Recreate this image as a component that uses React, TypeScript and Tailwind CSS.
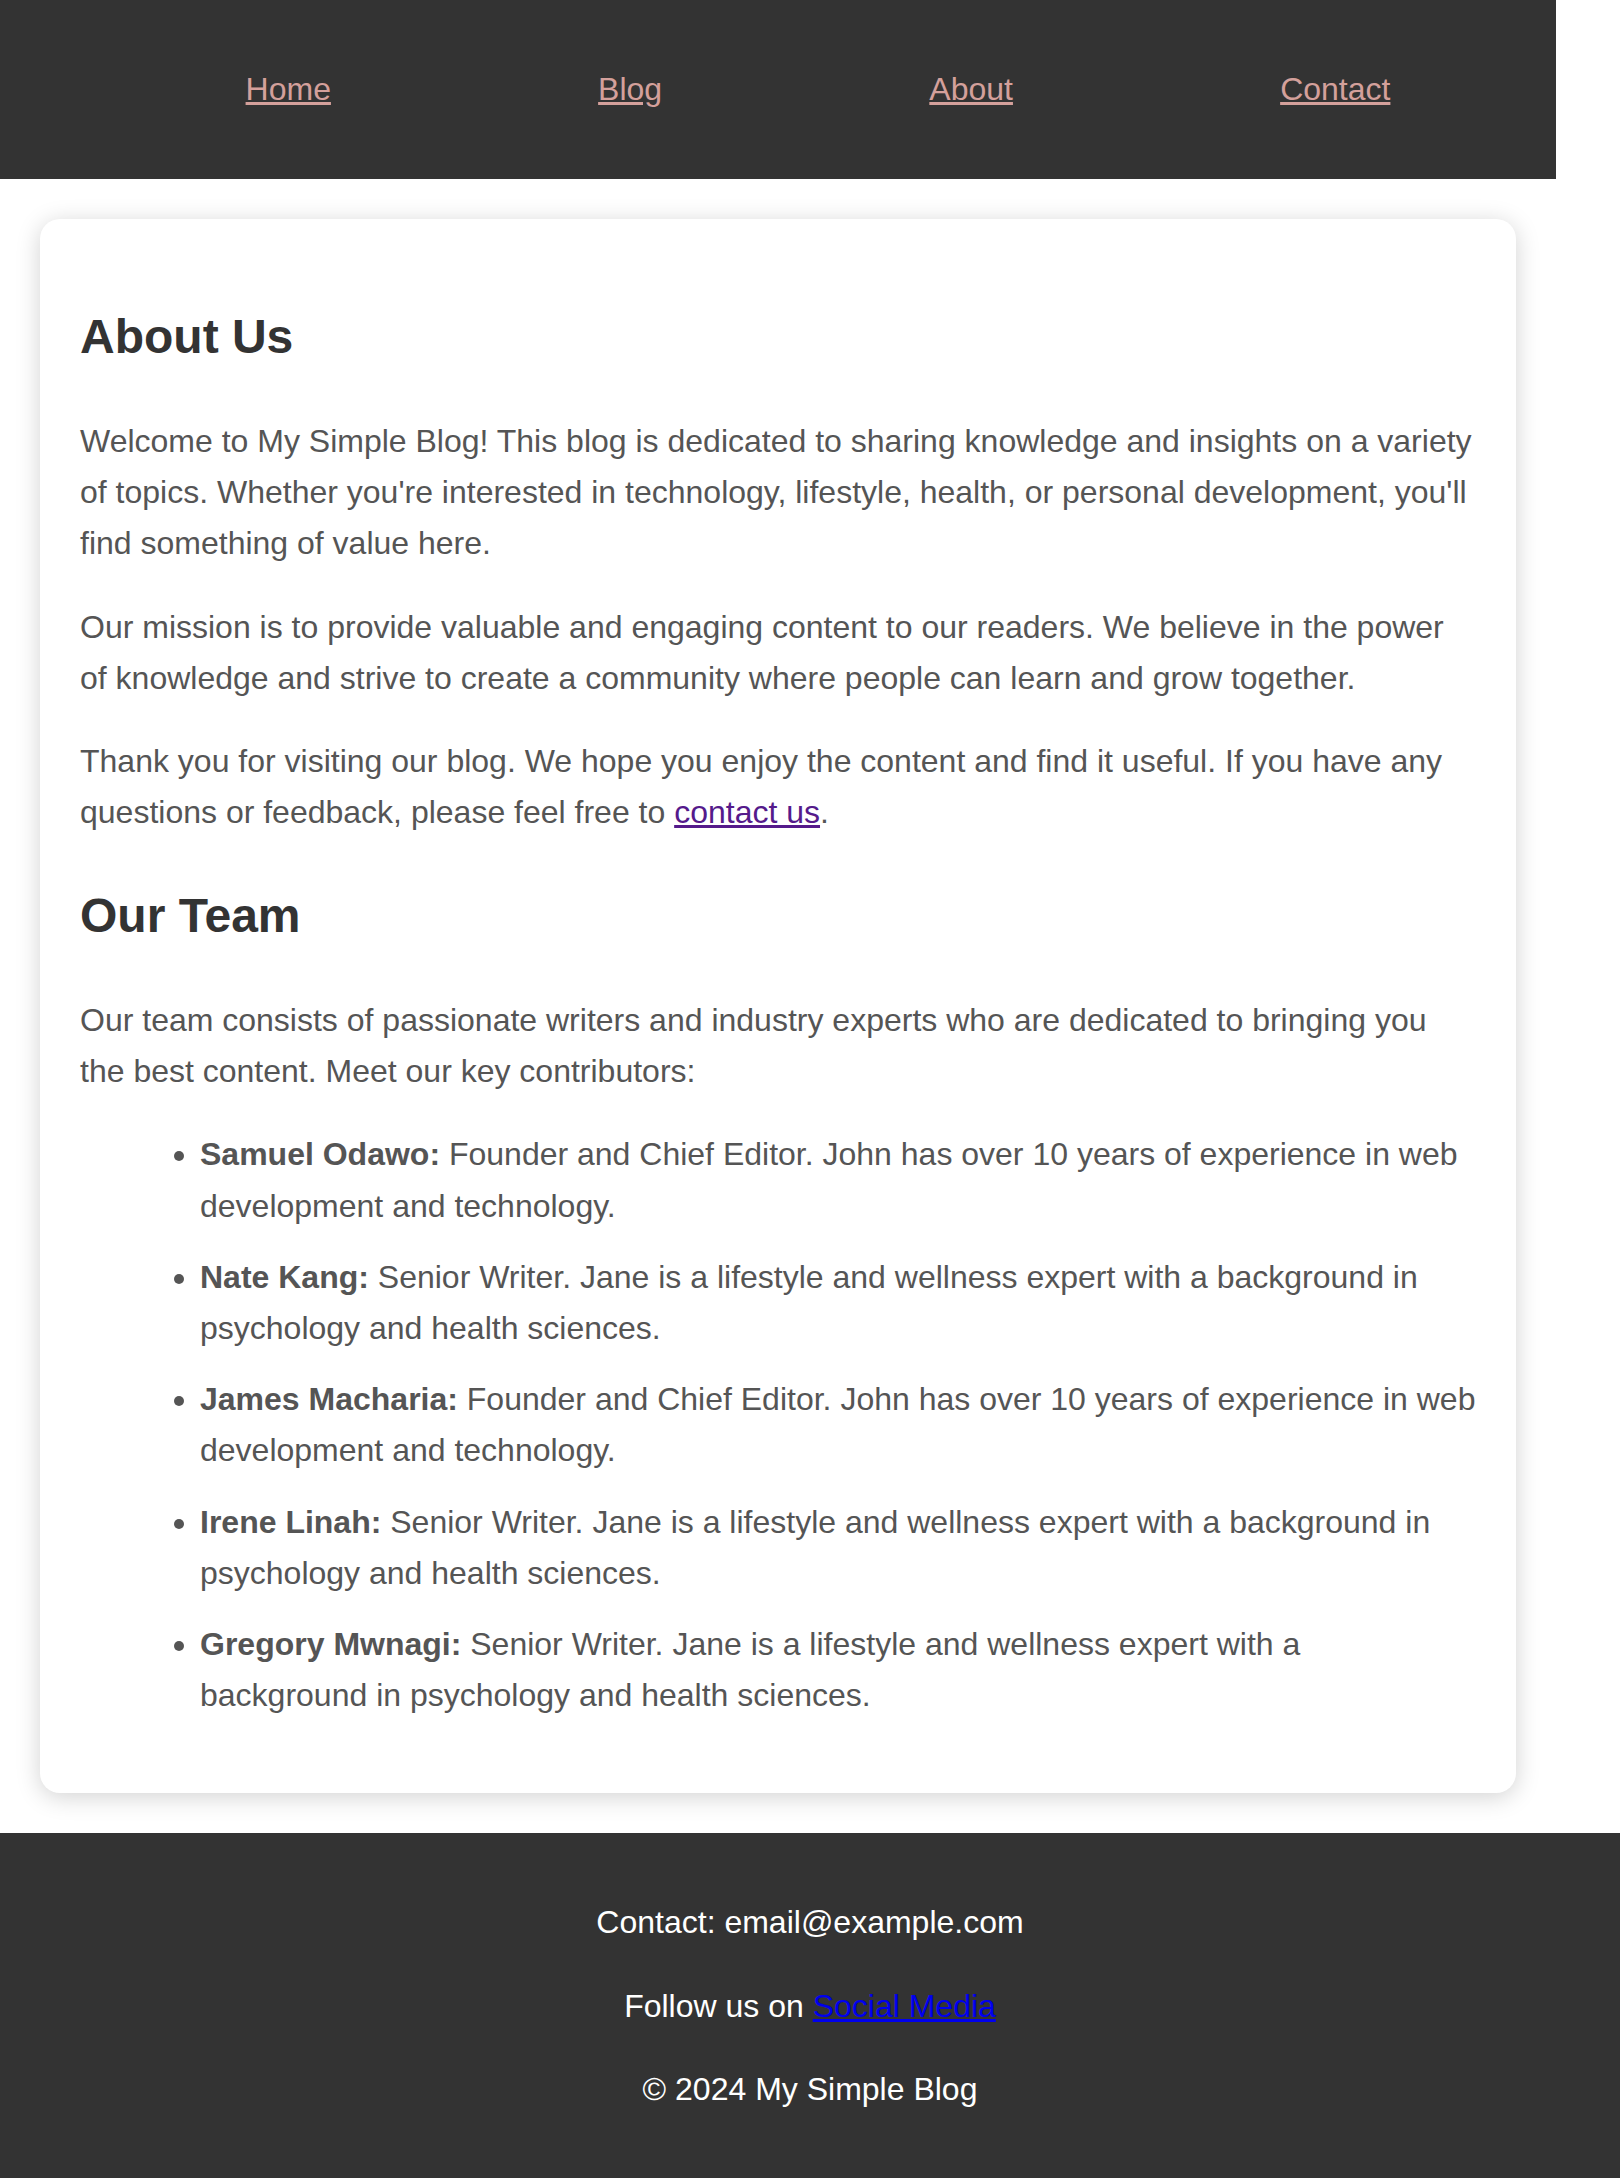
import React from "react";

const team = [
  { name: "Samuel Odawo:", text: "Founder and Chief Editor. John has over 10 years of experience in web development and technology." },
  { name: "Nate Kang:", text: "Senior Writer. Jane is a lifestyle and wellness expert with a background in psychology and health sciences." },
  { name: "James Macharia:", text: "Founder and Chief Editor. John has over 10 years of experience in web development and technology." },
  { name: "Irene Linah:", text: "Senior Writer. Jane is a lifestyle and wellness expert with a background in psychology and health sciences." },
  { name: "Gregory Mwnagi:", text: "Senior Writer. Jane is a lifestyle and wellness expert with a background in psychology and health sciences." },
];

export default function App() {
  return (
    <div className="min-h-[2178px] bg-white text-[32px] leading-[1.6] text-[#555555] font-['Liberation_Sans',Arial,sans-serif]">
      <div className="w-[1556px]">
        <header className="bg-[#333333] px-[32px] py-[32px]">
          <nav>
            <ul className="my-[32px] pl-[80px] flex justify-around list-none">
              <li><a href="#" className="underline text-[#d4a09b]">Home</a></li>
              <li><a href="#" className="underline text-[#d4a09b]">Blog</a></li>
              <li><a href="#" className="underline text-[#d4a09b]">About</a></li>
              <li><a href="#" className="underline text-[#d4a09b]">Contact</a></li>
            </ul>
          </nav>
        </header>
        <main className="mx-[40px] my-[40px] p-[40px] bg-white rounded-[20px] shadow-[0_4px_24px_rgba(0,0,0,0.18)]">
          <h2 className="mt-[40px] mb-[40px] text-[48px] font-bold text-[#333333]">About Us</h2>
          <p className="mb-[32px]">
            Welcome to My Simple Blog! This blog is dedicated to sharing knowledge and insights on a variety of topics. Whether you're interested in technology, lifestyle, health, or personal development, you'll find something of value here.
          </p>
          <p className="mb-[32px]">
            Our mission is to provide valuable and engaging content to our readers. We believe in the power of knowledge and strive to create a community where people can learn and grow together.
          </p>
          <p>
            Thank you for visiting our blog. We hope you enjoy the content and find it useful. If you have any questions or feedback, please feel free to{" "}
            <a href="#" className="underline text-[#551a8b]">contact us</a>.
          </p>
          <h2 className="mt-[40px] mb-[40px] text-[48px] font-bold text-[#333333]">Our Team</h2>
          <p className="mb-[32px]">
            Our team consists of passionate writers and industry experts who are dedicated to bringing you the best content. Meet our key contributors:
          </p>
          <ul className="list-disc pl-[120px] mb-[32px] flex flex-col gap-[20px]">
            {team.map((m) => (
              <li key={m.name}>
                <strong className="font-bold">{m.name}</strong> {m.text}
              </li>
            ))}
          </ul>
        </main>
      </div>
      <footer className="bg-[#333333] text-white text-center py-[32px]">
        <p className="my-[32px]">Contact: email@example.com</p>
        <p className="my-[32px]">
          Follow us on <a href="#" className="underline text-[#0000ee]">Social Media</a>
        </p>
        <p className="my-[32px]">© 2024 My Simple Blog</p>
      </footer>
    </div>
  );
}
